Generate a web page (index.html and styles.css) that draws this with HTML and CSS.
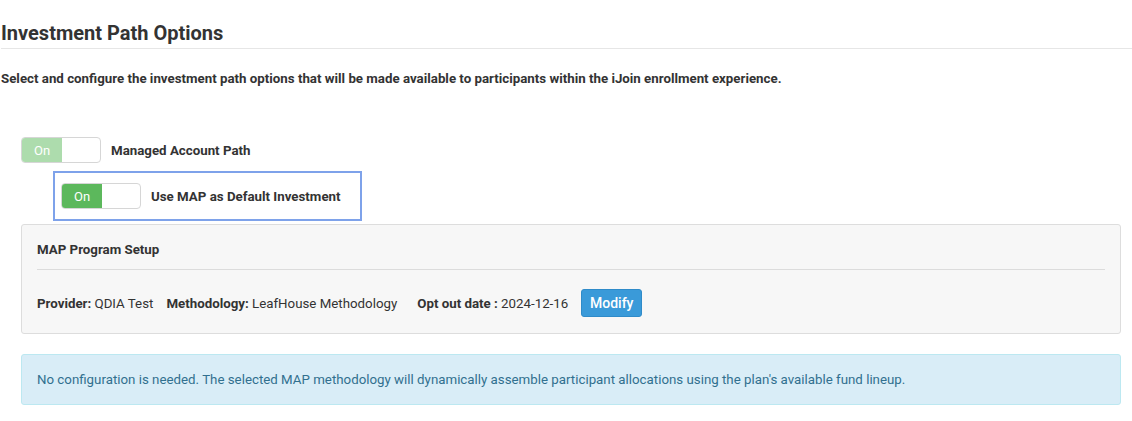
FILE: index.html
```html
<!DOCTYPE html>
<html>
<head>
<meta charset="utf-8">
<link rel="stylesheet" href="styles.css">
</head>
<body>
<div class="page">
  <h2 class="title">Investment Path Options</h2>
  <p class="intro">Select and configure the investment path options that will be made available to participants within the iJoin enrollment experience.</p>

  <div class="opt-row">
    <div class="toggle faded"><span class="on">On</span><span class="off"></span></div>
    <span class="opt-label">Managed Account Path</span>
  </div>

  <div class="focus-box">
    <div class="toggle"><span class="on">On</span><span class="off"></span></div>
    <span class="opt-label">Use MAP as Default Investment</span>
  </div>

  <div class="panel">
    <div class="panel-title">MAP Program Setup</div>
    <div class="panel-rule"></div>
    <div class="panel-row">
      <span class="item"><b>Provider:</b> QDIA Test</span>
      <span class="item"><b>Methodology:</b> LeafHouse Methodology</span>
      <span class="item gap"><b>Opt out date :</b> 2024-12-16</span>
      <button class="btn">Modify</button>
    </div>
  </div>

  <div class="alert">No configuration is needed. The selected MAP methodology will dynamically assemble participant allocations using the plan's available fund lineup.</div>
</div>
</body>
</html>
```
FILE: styles.css
```css
* { box-sizing: border-box; }
body {
  margin: 0;
  background: #fff;
  font-family: Roboto, "Liberation Sans", Arial, sans-serif;
  color: #333;
}
.page { padding: 0 11px 0 1px; width: 1132px; }
.title {
  margin: 0;
  padding-top: 20px;
  font-size: 20px;
  font-weight: 700;
  line-height: 26px;
  color: #333;
  border-bottom: 1px solid #e6e6e6;
  padding-bottom: 2px;
  margin-right: -11px;
}
.intro {
  margin: 22px 0 0;
  font-size: 13.3px;
  font-weight: 700;
  line-height: 16px;
}
.opt-row {
  display: flex;
  align-items: center;
  margin: 50px 0 0 20px;
  height: 26px;
}
.toggle {
  width: 80px;
  height: 26px;
  border: 1px solid #d6d6d6;
  border-radius: 4px;
  display: flex;
  overflow: hidden;
  background: #fff;
  flex: none;
}
.toggle .on {
  width: 40px;
  background: #5cb85c;
  color: #fff;
  font-size: 13px;
  display: flex;
  align-items: center;
  justify-content: center;
}
.toggle.faded .on { background: #addcad; }
.toggle .off { flex: 1; }
.opt-label {
  margin-left: 10px;
  font-size: 13.3px;
  font-weight: 700;
}
.focus-box {
  display: flex;
  align-items: center;
  width: 309px;
  height: 50px;
  margin: 8px 0 0 52px;
  border: 2px solid #7ea2ea;
  padding-left: 6px;
}
.panel {
  margin: 3px 0 0 20px;
  background: #f7f7f7;
  border: 1px solid #dddddd;
  border-radius: 3px;
  padding: 0 15px;
  height: 110px;
}
.panel-title {
  font-size: 13.3px;
  font-weight: 700;
  padding-top: 16px;
  line-height: 17px;
}
.panel-rule {
  border-top: 1px solid #dcdcdc;
  margin-top: 11px;
}
.panel-row {
  display: flex;
  align-items: center;
  margin-top: 19px;
  font-size: 13.3px;
}
.item { margin-right: 13px; }
.item b { font-weight: 700; }
.item.gap { margin-left: 7px; }
.btn {
  font-family: Roboto, "Liberation Sans", Arial, sans-serif;
  background: #3a9ad9;
  color: #fff;
  border: 1px solid #2f8bc9;
  border-radius: 3px;
  font-size: 14px;
  font-weight: 500;
  height: 28px;
  width: 61px;
  padding: 0;
}
.alert {
  margin: 20px 0 0 20px;
  background: #d9edf7;
  border: 1px solid #bce8f1;
  border-radius: 3px;
  color: #31708f;
  font-size: 13.3px;
  height: 51px;
  padding: 0 15px;
  display: flex;
  align-items: center;
}
```
